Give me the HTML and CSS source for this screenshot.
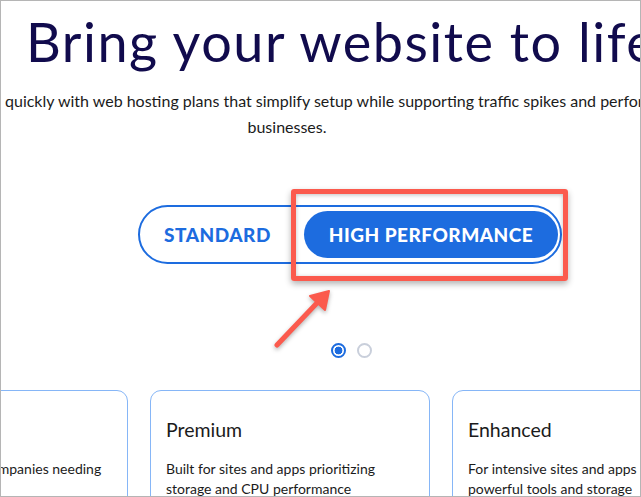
FILE: index.html
```html
<!DOCTYPE html>
<html lang="en">
<head>
<meta charset="utf-8">
<title>High Performance Hosting</title>
<link rel="stylesheet" href="styles.css">
</head>
<body>
<div class="frame">
  <header class="hero">
    <h1 class="title">Bring your website to life</h1>
    <p class="sub">
      <span class="sub-line first">quickly with web hosting plans that simplify setup while supporting traffic spikes and perfor</span>
      <span class="sub-line last">businesses.</span>
    </p>
  </header>

  <section class="switcher">
    <div class="toggle">
      <button class="opt">STANDARD</button>
      <button class="opt active">HIGH PERFORMANCE</button>
    </div>
    <div class="highlight"></div>
    <svg class="arrow" width="70" height="70" viewBox="0 0 70 70">
      <line x1="10" y1="60" x2="50" y2="18" stroke="#fb5a4d" stroke-width="5" stroke-linecap="round"/>
      <polygon points="62,6 58,25 43,11" fill="#fb5a4d" stroke="#fb5a4d" stroke-width="2" stroke-linejoin="round"/>
    </svg>
  </section>

  <div class="dots">
    <span class="dot on"></span>
    <span class="dot"></span>
  </div>

  <section class="cards">
    <article class="card">
      <h2 class="card-title">Enable</h2>
      <p class="card-text">For businesses and companies needing extra resources</p>
    </article>
    <article class="card">
      <h2 class="card-title">Premium</h2>
      <p class="card-text">Built for sites and apps prioritizing storage and CPU performance</p>
    </article>
    <article class="card">
      <h2 class="card-title">Enhanced</h2>
      <p class="card-text">For intensive sites and apps needing powerful tools and storage</p>
    </article>
  </section>
</div>
</body>
</html>
```

FILE: styles.css
```css
* { box-sizing: border-box; }

html, body {
  margin: 0;
  padding: 0;
  background: #ffffff;
  overflow: hidden;
}

.frame {
  width: 641px;
  height: 497px;
  border: 1px solid #b5b5b5;
  overflow: hidden;
  font-family: "Lato", "Open Sans", sans-serif;
  color: #1b1b1b;
}

.hero {
  padding-top: 10px;
}

.title {
  margin: 0 0 0 25px;
  white-space: nowrap;
  font-family: "Lato", sans-serif;
  font-weight: 400;
  font-size: 54px;
  line-height: 62px;
  color: #110b4d;
  letter-spacing: 1.5px;
}

.sub {
  margin: 15px 0 0 0;
  font-size: 16px;
  line-height: 26px;
  color: #1b1b1b;
}

.sub-line {
  display: block;
  white-space: nowrap;
}

.sub-line.first {
  margin-left: 4px;
}

.sub-line.last {
  text-align: center;
  width: 572px;
}

.switcher {
  position: relative;
  margin-top: 65px;
  height: 59px;
  padding-left: 137px;
}

.toggle {
  display: flex;
  align-items: center;
  width: 424px;
  height: 59px;
  border: 2px solid #1d6cdf;
  border-radius: 30px;
  padding: 0 2px 0 0;
}

.opt {
  border: 0;
  background: none;
  font-family: "Lato", sans-serif;
  font-weight: 900;
  font-size: 19px;
  letter-spacing: 0.5px;
  color: #1d6cdf;
  cursor: pointer;
}

.opt:first-child {
  width: 164px;
  padding: 0 9px 0 0;
  text-align: center;
}

.opt.active {
  flex: 1;
  height: 47px;
  border-radius: 24px;
  background: #1d6cdf;
  color: #ffffff;
}

.highlight {
  position: absolute;
  left: 290px;
  top: -16px;
  width: 277px;
  height: 92px;
  border: 5px solid #fb5a4d;
  border-radius: 3px;
  box-shadow: 0 3px 6px rgba(0, 0, 0, 0.3), inset 0 1px 4px rgba(0, 0, 0, 0.25);
}

.arrow {
  position: absolute;
  left: 266px;
  top: 80px;
  filter: drop-shadow(0 2px 2px rgba(0, 0, 0, 0.3));
  overflow: visible;
}

.dots {
  display: flex;
  gap: 11px;
  margin: 79px 0 0 330px;
}

.dot {
  width: 15px;
  height: 15px;
  border-radius: 50%;
  border: 2px solid #c9cfdb;
  background: #ffffff;
}

.dot.on {
  border-color: #1d6cdf;
  background: radial-gradient(circle, #1d6cdf 0 3.6px, #ffffff 4.2px);
}

.cards {
  display: flex;
  gap: 22px;
  margin: 32px 0 0 -153px;
}

.card {
  flex: 0 0 280px;
  height: 200px;
  border: 1px solid #86b6f7;
  border-radius: 11px;
  padding: 27px 15px 0 15px;
}

.card-title {
  margin: 0;
  font-weight: 400;
  font-size: 19.5px;
  line-height: 24px;
  color: #1b1b1b;
}

.card-text {
  margin: 17px 0 0 0;
  font-size: 14px;
  line-height: 20px;
  color: #1b1b1b;
}
```
